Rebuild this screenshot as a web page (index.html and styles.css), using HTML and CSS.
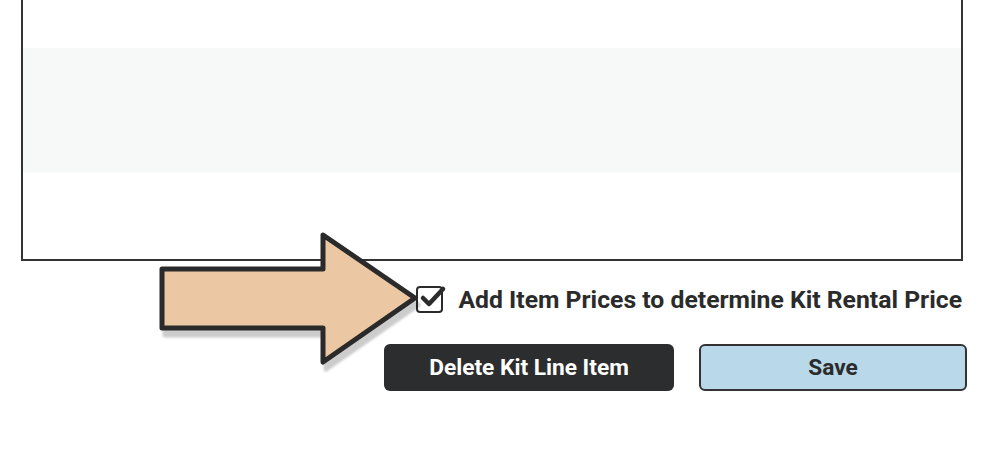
FILE: index.html
```
<!DOCTYPE html>
<html>
<head>
<meta charset="utf-8">
<link rel="stylesheet" href="styles.css">
</head>
<body>
<div class="page">
  <div class="table-box">
    <div class="row"></div>
    <div class="row stripe"></div>
    <div class="row last"></div>
  </div>
  <div class="options">
    <label class="check">
      <span class="box">
        <svg viewBox="0 0 30 30" width="30" height="30" class="tick"><path d="M6 16 L12 22 L26 7" fill="none" stroke="#2b2b2b" stroke-width="4.5" stroke-linecap="round" stroke-linejoin="round"/></svg>
      </span>
      <span class="label">Add Item Prices to determine Kit Rental Price</span>
    </label>
  </div>
  <div class="actions">
    <button class="btn dark">Delete Kit Line Item</button>
    <button class="btn light">Save</button>
  </div>
  <svg class="arrow" width="280" height="150" viewBox="0 0 280 150">
    <path d="M12 39 L173 39 L173 5 L265 68 L173 132 L173 98 L12 98 Z" fill="#ebc7a3" stroke="#2a2a2a" stroke-width="5" stroke-linejoin="round"/>
  </svg>
</div>
</body>
</html>
```
FILE: styles.css
```
html, body {
  margin: 0;
  padding: 0;
  background: #ffffff;
}
body {
  font-family: Roboto, "Liberation Sans", Arial, sans-serif;
  width: 986px;
  height: 452px;
  overflow: hidden;
}
.page {
  position: relative;
  padding: 0 23px 0 21px;
}
.table-box {
  border: 2px solid #333333;
  border-top: none;
  display: flex;
  flex-direction: column;
}
.row {
  height: 48px;
}
.row.stripe {
  height: 125px;
  background: #f7f9f8;
}
.row.last {
  height: 86px;
}
.options {
  display: flex;
  justify-content: flex-end;
  padding-top: 23px;
  padding-right: 1px;
  height: 30px;
}
.check {
  display: flex;
  align-items: center;
  gap: 15px;
}
.box {
  position: relative;
  width: 23px;
  height: 23px;
  border: 2px solid #2b2b2b;
  border-radius: 4px;
  background: #fff;
}
.tick {
  position: absolute;
  left: -1px;
  top: -6px;
}
.label {
  font-size: 24.75px;
  font-weight: 700;
  color: #2b2b2b;
  white-space: nowrap;
}
.actions {
  display: flex;
  justify-content: flex-end;
  gap: 25px;
  padding-top: 30px;
  margin-right: -4px;
}
.btn {
  font-family: Roboto, "Liberation Sans", Arial, sans-serif;
  font-weight: 700;
  font-size: 22.7px;
  height: 47px;
  border-radius: 6px;
  cursor: pointer;
  padding: 0;
}
.btn.dark {
  width: 290px;
  background: #2c2d2f;
  color: #ffffff;
  border: none;
}
.btn.light {
  width: 268px;
  background: #b9d9ea;
  color: #2b2b2b;
  border: 2px solid #333333;
}
.arrow {
  position: absolute;
  left: 150px;
  top: 230px;
  filter: drop-shadow(3px 7px 1px rgba(0, 0, 0, 0.2));
}
```
